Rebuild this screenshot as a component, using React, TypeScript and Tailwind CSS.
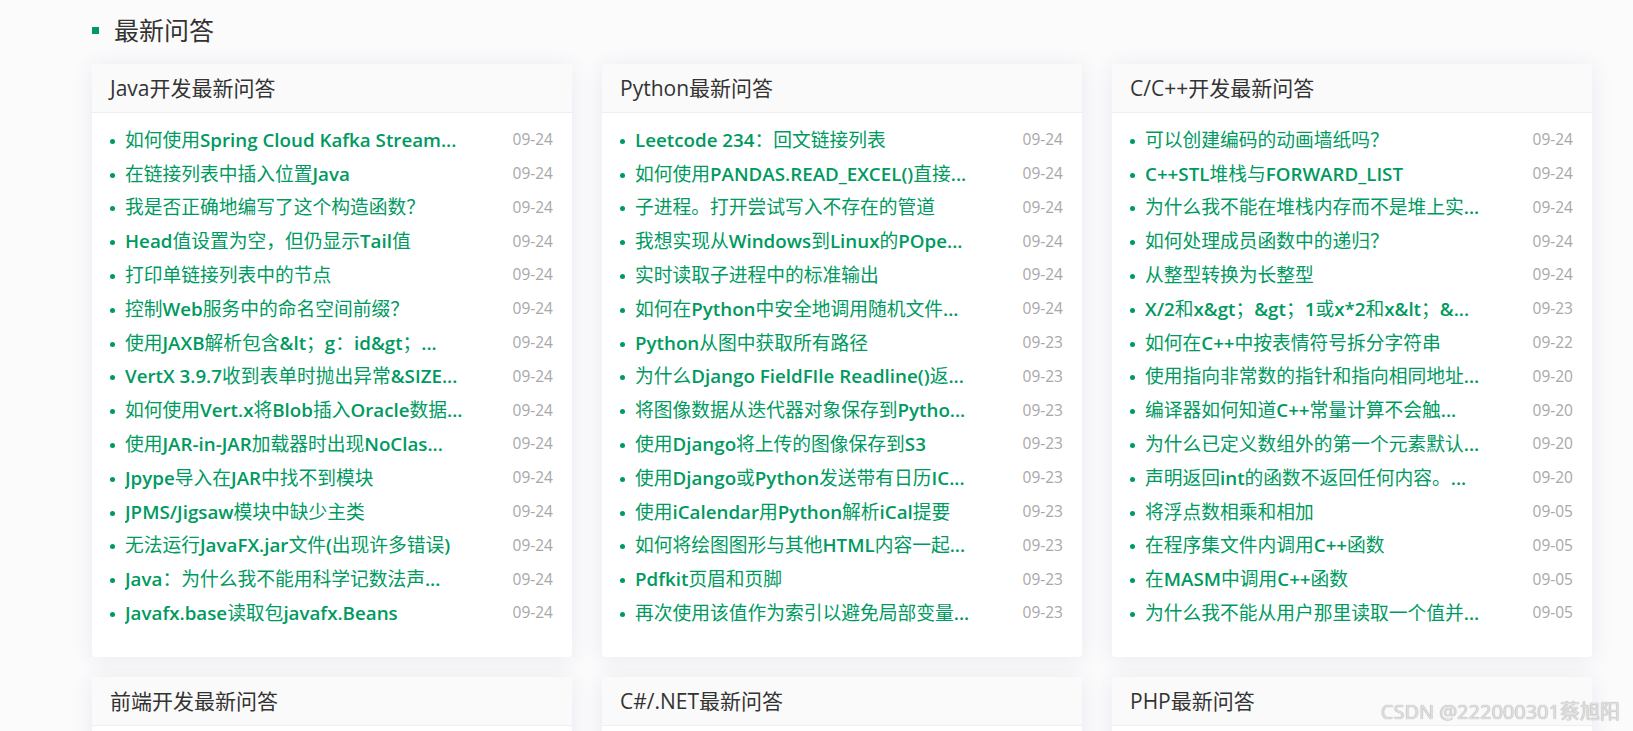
const FONT = "font-['Open_Sans','Noto_Sans_CJK_SC',sans-serif]";

type Item = { title: string; date: string };
type Section = { name: string; items: Item[] };

const d = (title: string, date: string): Item => ({ title, date });

const SECTIONS: Section[] = [
  {
    name: "Java开发最新问答",
    items: [
      d("如何使用Spring Cloud Kafka Stream...", "09-24"),
      d("在链接列表中插入位置Java", "09-24"),
      d("我是否正确地编写了这个构造函数？", "09-24"),
      d("Head值设置为空，但仍显示Tail值", "09-24"),
      d("打印单链接列表中的节点", "09-24"),
      d("控制Web服务中的命名空间前缀？", "09-24"),
      d("使用JAXB解析包含&lt；g：id&gt；...", "09-24"),
      d("VertX 3.9.7收到表单时抛出异常&SIZE...", "09-24"),
      d("如何使用Vert.x将Blob插入Oracle数据...", "09-24"),
      d("使用JAR-in-JAR加载器时出现NoClas...", "09-24"),
      d("Jpype导入在JAR中找不到模块", "09-24"),
      d("JPMS/Jigsaw模块中缺少主类", "09-24"),
      d("无法运行JavaFX.jar文件(出现许多错误)", "09-24"),
      d("Java：为什么我不能用科学记数法声...", "09-24"),
      d("Javafx.base读取包javafx.Beans", "09-24"),
    ],
  },
  {
    name: "Python最新问答",
    items: [
      d("Leetcode 234：回文链接列表", "09-24"),
      d("如何使用PANDAS.READ_EXCEL()直接...", "09-24"),
      d("子进程。打开尝试写入不存在的管道", "09-24"),
      d("我想实现从Windows到Linux的POpe...", "09-24"),
      d("实时读取子进程中的标准输出", "09-24"),
      d("如何在Python中安全地调用随机文件...", "09-24"),
      d("Python从图中获取所有路径", "09-23"),
      d("为什么Django FieldFIle Readline()返...", "09-23"),
      d("将图像数据从迭代器对象保存到Pytho...", "09-23"),
      d("使用Django将上传的图像保存到S3", "09-23"),
      d("使用Django或Python发送带有日历IC...", "09-23"),
      d("使用iCalendar用Python解析iCal提要", "09-23"),
      d("如何将绘图图形与其他HTML内容一起...", "09-23"),
      d("Pdfkit页眉和页脚", "09-23"),
      d("再次使用该值作为索引以避免局部变量...", "09-23"),
    ],
  },
  {
    name: "C/C++开发最新问答",
    items: [
      d("可以创建编码的动画墙纸吗？", "09-24"),
      d("C++STL堆栈与FORWARD_LIST", "09-24"),
      d("为什么我不能在堆栈内存而不是堆上实...", "09-24"),
      d("如何处理成员函数中的递归？", "09-24"),
      d("从整型转换为长整型", "09-24"),
      d("X/2和x&gt；&gt；1或x*2和x&lt；&...", "09-23"),
      d("如何在C++中按表情符号拆分字符串", "09-22"),
      d("使用指向非常数的指针和指向相同地址...", "09-20"),
      d("编译器如何知道C++常量计算不会触...", "09-20"),
      d("为什么已定义数组外的第一个元素默认...", "09-20"),
      d("声明返回int的函数不返回任何内容。...", "09-20"),
      d("将浮点数相乘和相加", "09-05"),
      d("在程序集文件内调用C++函数", "09-05"),
      d("在MASM中调用C++函数", "09-05"),
      d("为什么我不能从用户那里读取一个值并...", "09-05"),
    ],
  },
  { name: "前端开发最新问答", items: [] },
  { name: "C#/.NET最新问答", items: [] },
  { name: "PHP最新问答", items: [] },
];

// latin runs look heavier than the CJK glyphs in the original
function Title({ text }: { text: string }) {
  const parts = text.split(/([\x20-\x7E]+)/).filter(Boolean);
  return (
    <>
      {parts.map((p, i) =>
        /^[\x20-\x7E]+$/.test(p) ? (
          <span key={i} className="font-semibold">
            {p}
          </span>
        ) : (
          <span key={i}>{p}</span>
        )
      )}
    </>
  );
}

function Card({ section }: { section: Section }) {
  return (
    <div className="bg-white rounded-[4px] shadow-[0_2px_22px_rgba(40,50,110,0.09)] overflow-hidden">
      <div className="h-[49px] bg-[#fafafa] border-b border-[#efefef] pl-[18px] text-[21px] leading-[48px] text-[#333]">
        {section.name}
      </div>
      <ul className="pt-[10px] pb-[27px]">
        {section.items.map((item, i) => (
          <li key={i} className="flex items-center h-[33.8px] pl-[18px] pr-[19px]">
            <span className="w-[5px] h-[5px] rounded-full bg-[#009a61] mt-[3px] shrink-0" />
            <span className="ml-[10px] w-[350px] overflow-hidden whitespace-nowrap text-[18.75px] text-[#009a61]">
              <Title text={item.title} />
            </span>
            <span className="ml-auto text-[15.5px] text-[#a8a8a8]">{item.date}</span>
          </li>
        ))}
      </ul>
    </div>
  );
}

export default function App() {
  return (
    <div className={`${FONT} relative h-screen overflow-hidden bg-[#fbfbfc] pl-[92px]`}>
      <div className="flex items-center h-[35px] mt-[13px] mb-[16px]">
        <span className="w-[7px] h-[7px] bg-[#009a61]" />
        <h2 className="ml-[15px] text-[25px] text-[#333]">最新问答</h2>
      </div>
      <div className="grid grid-cols-[480px_480px_480px] gap-x-[30px] gap-y-[20px]">
        {SECTIONS.map((s) => (
          <Card key={s.name} section={s} />
        ))}
      </div>
      <div className="absolute right-[13px] top-[697px] text-[20px] text-[#e0e0e0] [text-shadow:0_0_1px_#8a8a8a]">
        CSDN @222000301蔡旭阳
      </div>
    </div>
  );
}
